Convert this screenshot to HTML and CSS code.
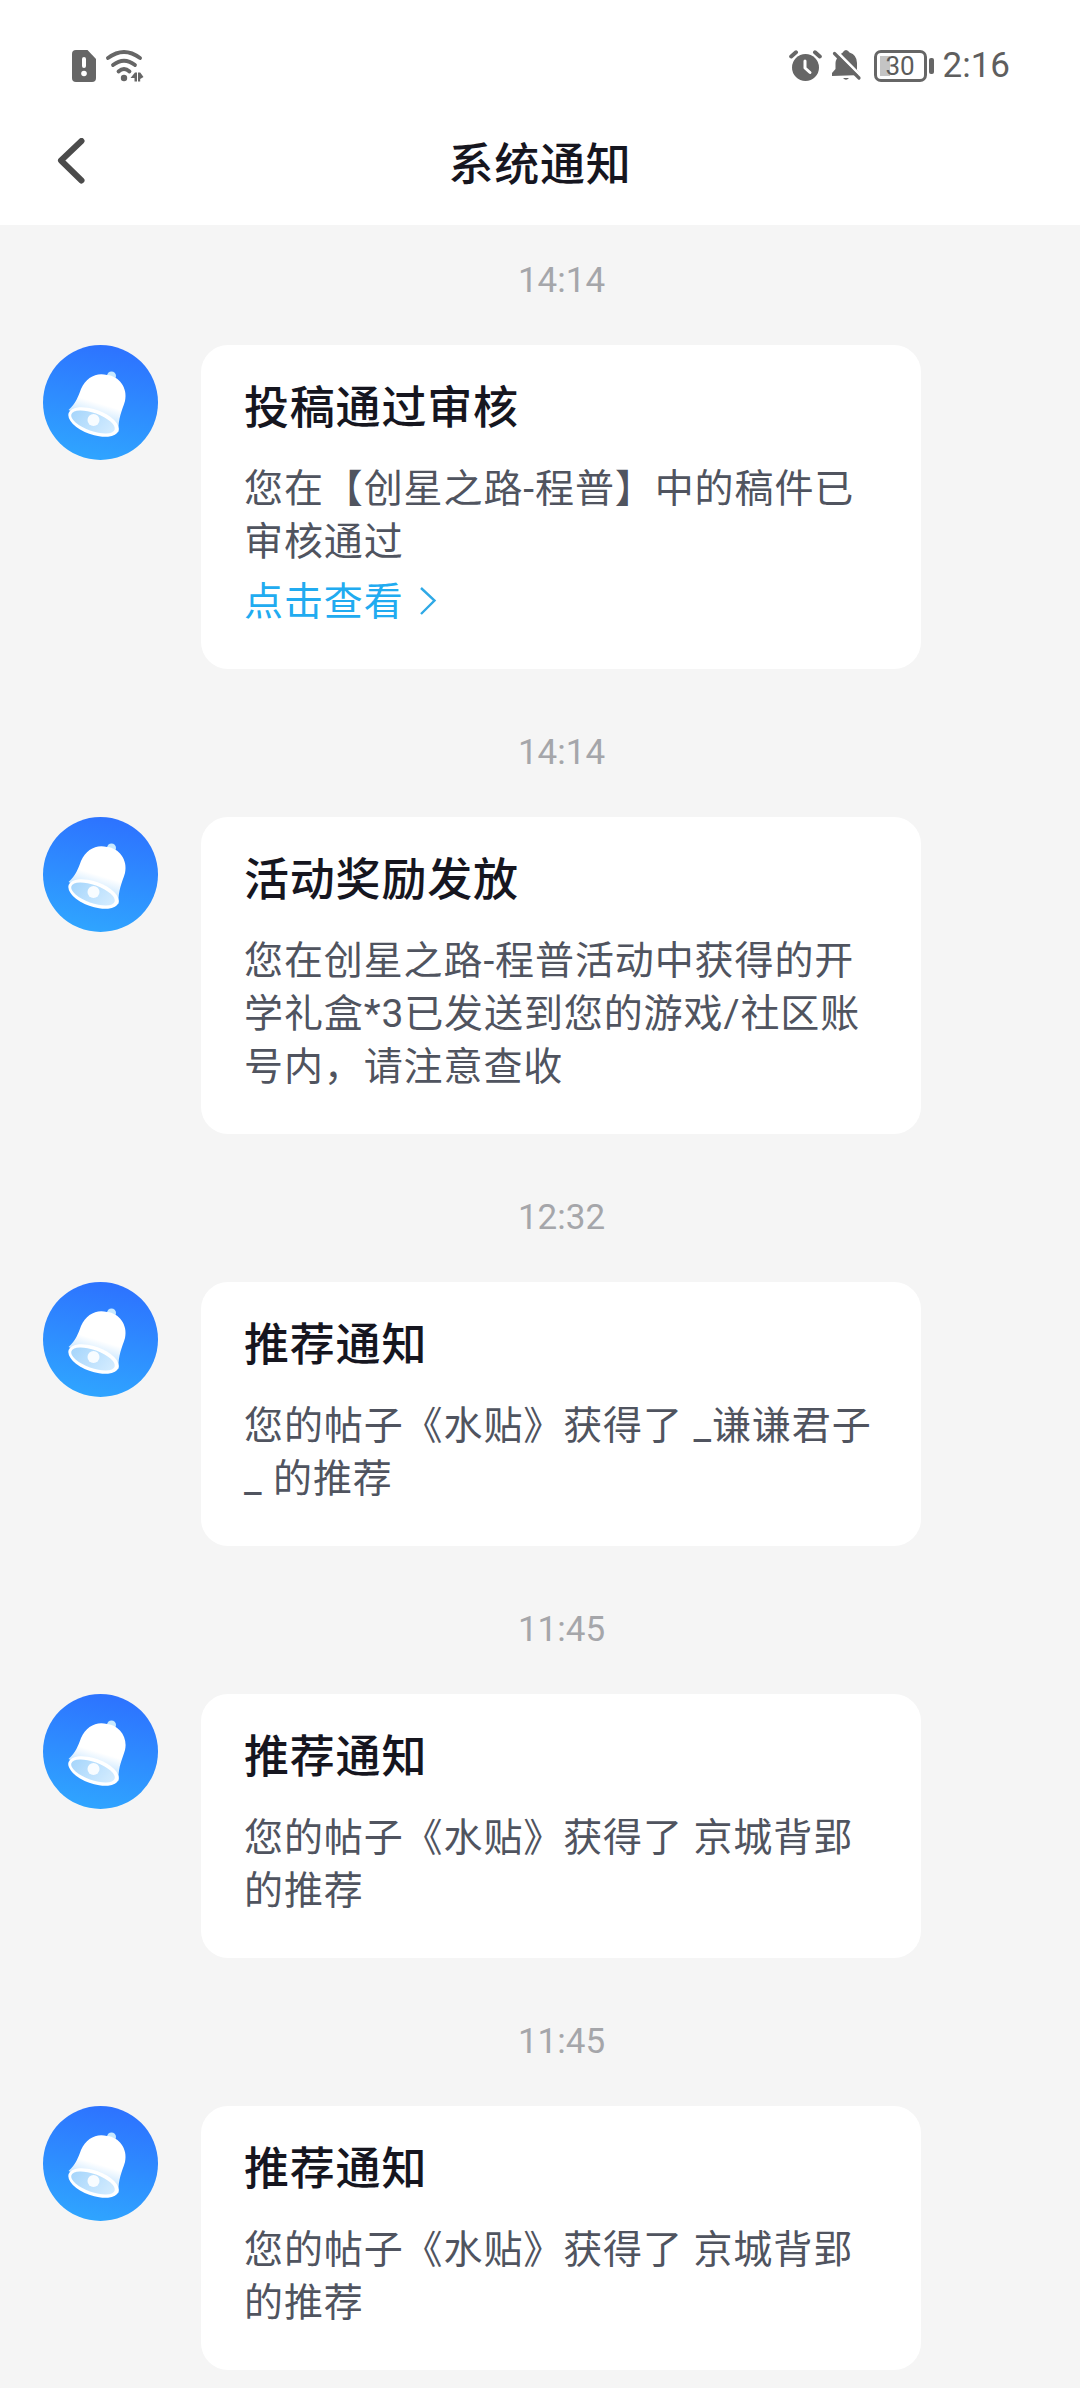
FILE: index.html
```html
<!DOCTYPE html>
<html lang="zh-CN">
<head>
<meta charset="utf-8">
<title>系统通知</title>
<link rel="stylesheet" href="styles.css">
</head>
<body>
<header class="top">
  <div class="status">
    <div class="status-group status-left">
      <svg width="24" height="32" viewBox="0 0 24 32">
        <path fill="#666" d="M4 0H15.500L24 9V28a4 4 0 0 1-4 4H4a4 4 0 0 1-4-4V4a4 4 0 0 1 4-4Z"/>
        <path d="M12 9V16" stroke="#fff" stroke-width="4" stroke-linecap="round"/>
        <circle cx="12" cy="23.500" r="2.800" fill="#fff"/>
      </svg>
      <svg width="38" height="32" viewBox="0 0 38 32">
        <g fill="none" stroke="#666" stroke-width="3.800" stroke-linecap="round">
          <path d="M2 8Q18 -4 34 8"/>
          <path d="M7 15Q18 6.500 29 15"/>
          <path d="M12.500 21.500Q18 16.500 23.500 21.500"/>
        </g>
        <circle cx="18" cy="28" r="3.200" fill="#666"/>
        <path fill="#666" d="M24.500 28l4.500-5.500h2V31.500h-2.500V28ZM32 22.500h2.200l3.300 4.500-3.300 2V31.500H32Z"/>
      </svg>
    </div>
    <div class="status-group status-right">
      <svg width="33" height="32" viewBox="0 0 33 32">
        <circle cx="16.500" cy="17.500" r="13.500" fill="#666"/>
        <path d="M2.200 6.500 7 2.300M30.800 6.500 26 2.300" stroke="#666" stroke-width="4" stroke-linecap="round"/>
        <path d="M16 11V18L21 22.500" fill="none" stroke="#fff" stroke-width="3" stroke-linecap="round" stroke-linejoin="round"/>
      </svg>
      <svg class="muted" width="30" height="32" viewBox="0 0 30 32">
        <path fill="#666" d="M0 26V23L3.500 19V13Q4 8 8 4.500L10.500 2.800Q12 0 14 0t3.500 2.500Q25 5 25 13V20L29 25Z"/>
        <path fill="#666" d="M11 28h6q-3 3.500-6 0Z"/>
        <path d="M4 1 29.500 26.500" stroke="#fff" stroke-width="3"/>
        <path d="M2.500 3.500 27 28" stroke="#666" stroke-width="3.200" stroke-linecap="round"/>
      </svg>
      <div class="battery"><span class="battery-level">30</span></div>
      <span class="clock">2:16</span>
    </div>
  </div>
  <nav class="nav">
    <svg class="back" width="28" height="46" viewBox="0 0 28 46"><path d="M24.500 3 4 22.500 24.500 42.500" fill="none" stroke="#4b4b4b" stroke-width="6" stroke-linecap="round" stroke-linejoin="round"/></svg>
    <h1 class="nav-title">系统通知</h1>
  </nav>
</header>
<main class="feed">
  <section class="item">
    <time class="time">14:14</time>
    <svg class="avatar" viewBox="0 0 115 115">
      <defs>
        <linearGradient id="sky" x1="0.600" y1="0" x2="0.400" y2="1"><stop offset="0" stop-color="#2d72ff"/><stop offset="1" stop-color="#2fa5ff"/></linearGradient>
        <linearGradient id="shell" x1="62" y1="30" x2="48" y2="76" gradientUnits="userSpaceOnUse"><stop offset="0.600" stop-color="#fff"/><stop offset="1" stop-color="#bfe2ff"/></linearGradient>
        <linearGradient id="hollow" x1="26" y1="68" x2="72" y2="86" gradientUnits="userSpaceOnUse"><stop offset="0" stop-color="#a3d4fb"/><stop offset="1" stop-color="#d6edff"/></linearGradient>
        <g id="bell">
          <circle cx="57.500" cy="57.500" r="57.500" fill="url(#sky)"/>
          <circle cx="68.500" cy="31" r="4.500" fill="#c8e9ff"/>
          <path fill="url(#shell)" d="M25.500 65C33 58 35 52 38 44C43 32 54 27 64 30C76 31 85 43 82 56C79 66 75 73 75.500 87Z"/>
          <ellipse cx="50.500" cy="77" rx="26.500" ry="12.500" transform="rotate(20 50.500 77)" fill="#fff"/>
          <ellipse cx="50" cy="77" rx="23" ry="9" transform="rotate(20 50 77)" fill="url(#hollow)"/>
          <circle cx="50.500" cy="75" r="6" fill="#f8fcff"/>
        </g>
      </defs>
      <use href="#bell"/>
    </svg>
    <article class="card">
      <h2 class="card-title">投稿通过审核</h2>
      <p class="card-text">您在【创星之路-程普】中的稿件已<br>审核通过</p>
      <a class="card-link">点击查看<svg class="chevron" width="18" height="30" viewBox="0 0 18 30"><path d="M2 2 15.500 14.500 2 28" fill="none" stroke="#2fa9e6" stroke-width="2.400"/></svg></a>
    </article>
  </section>
  <section class="item">
    <time class="time">14:14</time>
    <svg class="avatar" viewBox="0 0 115 115"><use href="#bell"/></svg>
    <article class="card">
      <h2 class="card-title">活动奖励发放</h2>
      <p class="card-text">您在创星之路-程普活动中获得的开<br>学礼盒*3已发送到您的游戏/社区账<br>号内，请注意查收</p>
    </article>
  </section>
  <section class="item">
    <time class="time">12:32</time>
    <svg class="avatar" viewBox="0 0 115 115"><use href="#bell"/></svg>
    <article class="card">
      <h2 class="card-title">推荐通知</h2>
      <p class="card-text">您的帖子《水贴》获得了 _谦谦君子<br>_ 的推荐</p>
    </article>
  </section>
  <section class="item">
    <time class="time">11:45</time>
    <svg class="avatar" viewBox="0 0 115 115"><use href="#bell"/></svg>
    <article class="card">
      <h2 class="card-title">推荐通知</h2>
      <p class="card-text">您的帖子《水贴》获得了 京城背郢<br>的推荐</p>
    </article>
  </section>
  <section class="item">
    <time class="time">11:45</time>
    <svg class="avatar" viewBox="0 0 115 115"><use href="#bell"/></svg>
    <article class="card">
      <h2 class="card-title">推荐通知</h2>
      <p class="card-text">您的帖子《水贴》获得了 京城背郢<br>的推荐</p>
    </article>
  </section>
</main>
</body>
</html>
```
FILE: styles.css
```css
* { box-sizing: border-box; }
body {
  margin: 0;
  width: 1080px;
  height: 2388px;
  overflow: hidden;
  background: #f5f5f5;
  font-family: Roboto, "Noto Sans CJK SC", sans-serif;
}
h1, h2, p { margin: 0; }
svg { display: block; flex: none; }

.top { height: 225px; background: #fff; }
.status {
  display: flex;
  justify-content: space-between;
  height: 130px;
  padding: 0 70px 0 72px;
}
.status-group { display: flex; align-items: center; height: 131px; }
.status-left { gap: 10px; }
.status-right { gap: 9px; }
.muted { margin-left: 1px; }
.battery {
  display: flex;
  align-items: center;
  margin-left: 3px;
}
.battery::after {
  content: "";
  width: 5px;
  height: 16px;
  margin-left: 2px;
  border-radius: 2px;
  background: #666;
}
.battery-level {
  width: 53px;
  height: 32px;
  border: 3px solid #666;
  border-radius: 7px;
  background: linear-gradient(90deg, #c4c4c4 10px, #fff 10px) 3px 3px / 41px 20px no-repeat;
  color: #5c5c5c;
  font-size: 26px;
  line-height: 27px;
  text-align: center;
}
.clock {
  padding-top: 1px;
  font-size: 35px;
  line-height: 42px;
  color: #5e5e5e;
}
.nav {
  display: grid;
  grid-template-columns: 58px 1fr 58px;
  height: 95px;
}
.back { grid-column: 1; grid-row: 1; margin: 8px 0 0 57px; }
.nav-title { grid-column: 2; grid-row: 1; padding-top: 3px; text-align: center; line-height: 66px; }
.nav-title, .card-title {
  font-size: 45px;
  font-weight: 500;
  letter-spacing: 0.8px;
  color: #16161f;
}

.item {
  display: grid;
  grid-template-columns: 115px 720px;
  column-gap: 43px;
  padding: 26px 0 28px 43px;
}
.time {
  grid-column: 2;
  height: 94px;
  padding-left: 1px;
  line-height: 60px;
  font-size: 35px;
  text-align: center;
  color: #a5a6aa;
}
.avatar { width: 115px; height: 115px; }
.card {
  padding: 34px 0 40px 43px;
  border-radius: 27px;
  background: #fff;
}
.card-title { height: 84px; line-height: 60px; }
.card-text, .card-link {
  font-size: 39px;
  line-height: 53px;
  letter-spacing: 0.9px;
  color: #50545f;
  white-space: nowrap;
}
.card-link {
  display: flex;
  align-items: center;
  gap: 15px;
  margin-top: 7px;
  color: #21abf0;
}
.chevron { margin-bottom: 3px; }
```
